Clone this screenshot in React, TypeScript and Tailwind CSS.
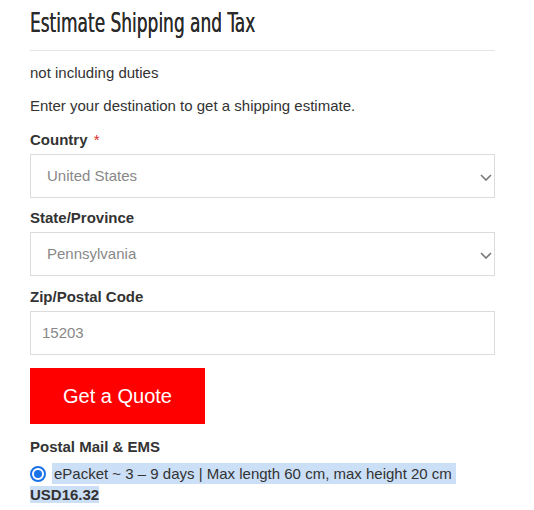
function Chevron() {
  return (
    <svg className="absolute right-[2px] top-[19px]" width="12" height="7" viewBox="0 0 12 7" fill="none">
      <path d="M1 1l5 5 5-5" stroke="#777" strokeWidth="1.6" />
    </svg>
  );
}

function SelectBox({ value }: { value: string }) {
  return (
    <div className="relative h-[44px] border border-[#dcdcdc] bg-white flex items-center pl-4 pr-3">
      <span className="text-[15px] text-[#888]">{value}</span>
      <Chevron />
    </div>
  );
}

export default function App() {
  return (
    <div className="min-h-[510px] bg-white px-[30px] pt-[5px] text-[#333]" style={{ fontFamily: '"Liberation Sans", Arial, sans-serif' }}>
      <div className="w-[465px]">
        <div className="h-[46px] border-b border-[#e5e5e5] overflow-hidden">
          <h2
            className="inline-block whitespace-nowrap origin-left scale-x-[0.7] text-[27px] leading-[36px] text-[#2b2b2b] [text-shadow:0_0_0.4px_#2b2b2b]"
            style={{ fontFamily: '"DejaVu Sans Condensed", "DejaVu Sans", sans-serif' }}
          >
            Estimate Shipping and Tax
          </h2>
        </div>
        <p className="mt-[12px] text-[15px] leading-[20px]">not including duties</p>
        <p className="mt-[13px] text-[15px] leading-[20px]">Enter your destination to get a shipping estimate.</p>

        <label className="block mt-[14px] text-[15px] font-bold leading-[20px]">
          Country <span className="text-[#e02b27] font-normal ml-[2px]">*</span>
        </label>
        <div className="mt-[4px]">
          <SelectBox value="United States" />
        </div>

        <label className="block mt-[10px] text-[15px] font-bold leading-[20px]">State/Province</label>
        <div className="mt-[4px]">
          <SelectBox value="Pennsylvania" />
        </div>

        <label className="block mt-[11px] text-[15px] font-bold leading-[20px]">Zip/Postal Code</label>
        <div className="mt-[4px] h-[44px] border border-[#dcdcdc] bg-white flex items-center pl-[11px]">
          <span className="text-[15px] text-[#888]">15203</span>
        </div>

        <button className="block mt-[13px] w-[175px] h-[56px] bg-[#ff0000] text-white text-[20px]">Get a Quote</button>

        <p className="mt-[13px] text-[15px] font-bold leading-[20px]">Postal Mail &amp; EMS</p>
        <div className="mt-[6px] text-[15px] leading-[21px]">
          <div className="flex items-center">
            <span className="w-[16px] h-[16px] rounded-full border-2 border-[#1a73e8] flex items-center justify-center mr-[6px] bg-white">
              <span className="w-[8px] h-[8px] rounded-full bg-[#1a73e8]" />
            </span>
            <span className="bg-[#cbdff7] pl-[2px] pr-[4px]">ePacket ~ 3 – 9 days | Max length 60 cm, max height 20 cm</span>
          </div>
          <div>
            <span className="bg-[#cbdff7] font-bold">USD16.32</span>
          </div>
        </div>
      </div>
    </div>
  );
}
